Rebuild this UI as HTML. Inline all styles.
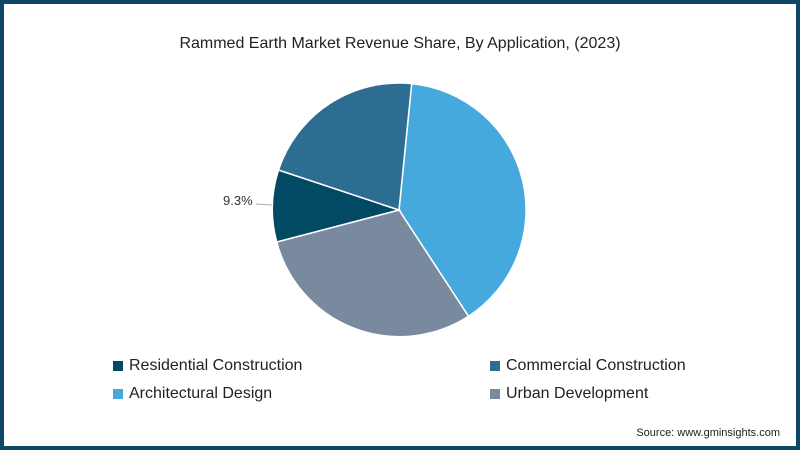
<!DOCTYPE html>
<html><head><style>
body{margin:0;width:800px;height:450px;overflow:hidden;font-family:"Liberation Sans",sans-serif;}
.f{position:absolute;left:0;top:0;width:792px;height:442px;border:4px solid #0f4565;background:#fff;}
.t{position:absolute;top:35px;left:0;width:800px;text-align:center;font-size:16px;color:#222;}
.l{position:absolute;font-size:16px;color:#222;}
.sq{position:absolute;width:10px;height:10px;}
.s{position:absolute;right:20px;top:427px;font-size:11px;color:#222;}
</style></head><body>
<div class="f"></div>
<div class="t">Rammed Earth Market Revenue Share, By Application, (2023)</div>
<svg width="800" height="450" style="position:absolute;left:0;top:0">
<g stroke="#fff" stroke-width="1.5">
<path d="M399,210 L411.7,83.6 A127,127 0 0 1 468.5,316.3 Z" fill="#45a9de"/>
<path d="M399,210 L468.5,316.3 A127,127 0 0 1 276.7,242 Z" fill="#7a8a9e"/>
<path d="M399,210 L276.7,242 A127,127 0 0 1 278.5,170 Z" fill="#024a63"/>
<path d="M399,210 L278.5,170 A127,127 0 0 1 411.7,83.6 Z" fill="#2c6d91"/>
</g>
<line x1="256" y1="204" x2="272" y2="205" stroke="#aaa" stroke-width="1"/>
<text x="223" y="205" font-size="13" fill="#333" font-family="Liberation Sans">9.3%</text>
</svg>
<div class="sq" style="left:113px;top:361px;background:#024a63"></div><div class="l" style="left:129px;top:357px">Residential Construction</div>
<div class="sq" style="left:490px;top:361px;background:#2c6d91"></div><div class="l" style="left:506px;top:357px">Commercial Construction</div>
<div class="sq" style="left:113px;top:389px;background:#45a9de"></div><div class="l" style="left:129px;top:385px">Architectural Design</div>
<div class="sq" style="left:490px;top:389px;background:#7a8a9e"></div><div class="l" style="left:506px;top:385px">Urban Development</div>
<div class="s">Source: www.gminsights.com</div>
</body></html>
